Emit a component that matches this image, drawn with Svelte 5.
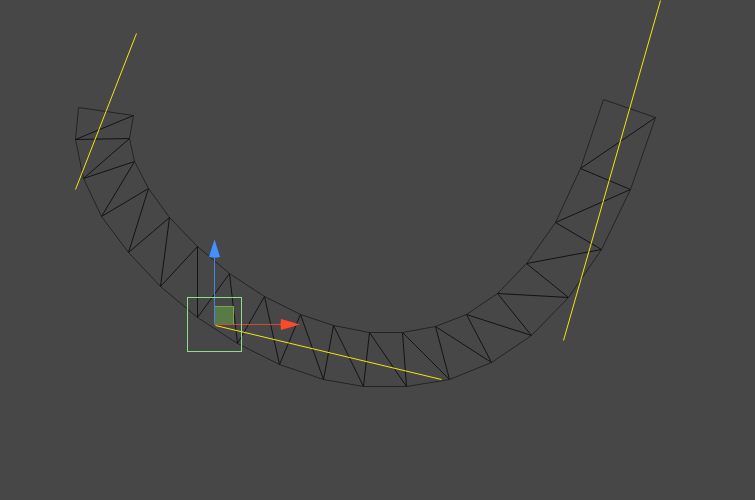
<script lang="ts">
    type Point = [number, number];

    const inner: Point[] = [
        [133, 115], [129, 138], [134, 161], [148, 188], [169, 217],
        [197, 246], [229, 273], [264, 296], [300, 314], [333, 325],
        [369, 332], [402, 332], [435, 326], [466, 314], [497, 293],
        [526, 263], [555, 222], [580, 168], [603, 99],
    ];

    const outer: Point[] = [
        [78, 107], [75, 139], [83, 178], [101, 216], [128, 252],
        [160, 286], [197, 317], [237, 343], [279, 364], [323, 379],
        [363, 386], [406, 386], [449, 379], [491, 362], [531, 335],
        [568, 297], [601, 249], [630, 189], [655, 117],
    ];

    const handles: [Point, Point][] = [
        [[136, 33], [75, 189]],
        [[660, 0], [563, 340]],
        [[215, 325], [441, 379]],
    ];

    // the edges shared by two triangles: diagonal, rung, diagonal, ...
    const zigzag = inner.flatMap((p, i) => i === 0 ? [p] : [outer[i], p]).slice(0, -1);

    // both sides of the strip, closed at the ends
    const border = [...inner, ...[...outer].reverse()];

    function str(points: Point[]) {
        return points.map(p => p.join(",")).join(" ");
    }
</script>

<main>
    <svg viewBox="0 0 755 500" role="img" aria-label="Curve mesh with handles">
        <!-- half a unit puts the points on pixel centres -->
        <g transform="translate(0.5 0.5)">
            <polygon class="border" points={str(border)} />
            <polyline class="inside" points={str(zigzag)} />

            {#each handles as [from, to]}
                <line class="handle" x1={from[0]} y1={from[1]} x2={to[0]} y2={to[1]} />
            {/each}
        </g>

        <g class="gizmo">
            <rect class="plane" x="214" y="306" width="20" height="19" />
            <path class="plane-edge" d="M214 306.5H233.5V324" />
            <path class="axis x" d="M215 324.5H282" />
            <path class="axis z" d="M214.5 324V256" />
            <path class="cone x" d="M281 319L300 324.5L281 330Q280 324.5 281 319Z" />
            <path class="cone z" d="M209 257L214.5 239.5L220 257Q214.5 258 209 257Z" />
            <rect class="selection" x="187.5" y="297.5" width="54" height="54" />
        </g>
    </svg>
</main>

<style>
    :global(body) {
        margin: 0;
        background-color: #474747;
    }

    main {
        background-color: #474747;
    }

    svg {
        display: block;
        width: 100%;
        height: 100vh;
    }

    .border,
    .inside,
    .plane-edge,
    .selection {
        fill: none;
    }

    .border {
        stroke: #242424;
    }

    .inside {
        stroke: #131313;
    }

    .handle {
        stroke: #f2e60a;
    }

    .plane {
        fill: #5a8046;
        fill-opacity: 0.9;
    }

    .plane-edge {
        stroke: #72a942;
    }

    .axis.x {
        stroke: #d44a30;
    }

    .axis.z {
        stroke: #4584e6;
    }

    .cone.x {
        fill: #fa4a2a;
    }

    .cone.z {
        fill: #4590ff;
    }

    .selection {
        stroke: #8fdc8a;
    }
</style>
